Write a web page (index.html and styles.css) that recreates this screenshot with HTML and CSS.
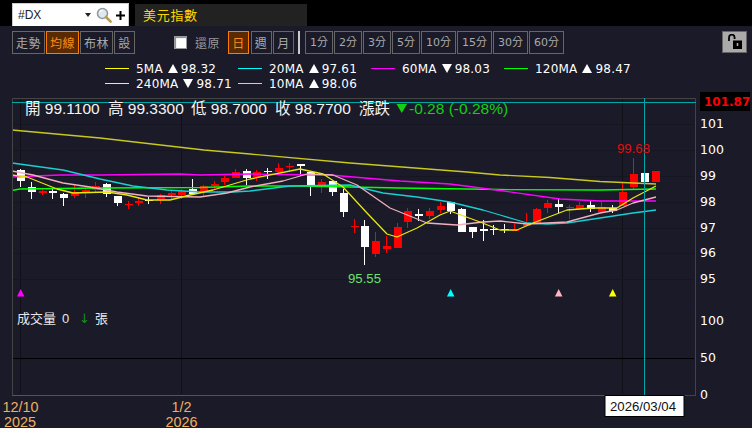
FILE: index.html
```html
<!DOCTYPE html>
<html lang="zh-Hant">
<head>
<meta charset="utf-8">
<title>美元指數</title>
<link rel="stylesheet" href="styles.css">
</head>
<body>
<header class="topbar">
  <div class="search">
    <span class="symbol">#DX</span>
    <span class="caret"></span>
    <svg class="glass" viewBox="0 0 16 16" width="16" height="16">
      <circle cx="6.5" cy="6.5" r="5" fill="#dfe8ee" stroke="#8f9aa3" stroke-width="1.6"/>
      <path d="M3.8 5.2a3 3 0 0 1 3-1.8" fill="none" stroke="#fff" stroke-width="1.2"/>
      <path d="M10 10l4.6 4.6" stroke="#b89a50" stroke-width="2.6" stroke-linecap="round"/>
    </svg>
    <svg class="plus" viewBox="0 0 9 9" width="9" height="9"><path d="M4.5 0v9M0 4.5h9" stroke="#000" stroke-width="2"/></svg>
  </div>
  <div class="title">美元指數</div>
</header>

<nav class="toolbar">
  <div class="group">
    <button class="btn w33">走勢</button>
    <button class="btn w33 on">均線</button>
    <button class="btn w33">布林</button>
    <button class="btn w21">設</button>
  </div>
  <label class="restore"><span class="check"></span><span>還原</span></label>
  <div class="group periods">
    <button class="btn w21 on">日</button>
    <button class="btn w21">週</button>
    <button class="btn w21">月</button>
  </div>
  <span class="divider"></span>
  <div class="group">
    <button class="btn w28 min">1分</button>
    <button class="btn w28 min">2分</button>
    <button class="btn w28 min">3分</button>
    <button class="btn w28 min">5分</button>
    <button class="btn w35 min">10分</button>
    <button class="btn w35 min">15分</button>
    <button class="btn w35 min">30分</button>
    <button class="btn w35 min">60分</button>
  </div>
  <button class="lock" aria-label="解鎖">
    <svg viewBox="0 0 16 16" width="16" height="16">
      <path d="M2 7V3.5a2.8 2.8 0 0 1 5.6 0V5" fill="none" stroke="#000" stroke-width="1.8"/>
      <rect x="6" y="6.5" width="9" height="8.5" fill="#000"/>
      <rect x="9.7" y="9" width="1.6" height="3" fill="#aaa"/>
    </svg>
  </button>
</nav>

<section class="legend">
  <div class="ma"><i class="y"></i><span class="nm">5MA</span><b class="up"></b><span>98.32</span></div>
  <div class="ma"><i class="c"></i><span class="nm">20MA</span><b class="up"></b><span>97.61</span></div>
  <div class="ma"><i class="m"></i><span class="nm">60MA</span><b class="dn"></b><span>98.03</span></div>
  <div class="ma"><i class="g"></i><span class="nm">120MA</span><b class="up"></b><span>98.47</span></div>
  <div class="ma"><i class="y"></i><span class="nm">240MA</span><b class="dn"></b><span>98.71</span></div>
  <div class="ma"><i class="p"></i><span class="nm">10MA</span><b class="up"></b><span>98.06</span></div>
</section>

<main class="chart">
  <svg id="plot" width="752" height="336" viewBox="0 92 752 336">
    <g id="grid"></g>
    <g id="candles"></g>
    <g id="lines"></g>
    <g id="frame"></g>
    <text class="info" y="114" x="25">開 99.1100</text>
    <text class="info" y="114" x="108">高 99.3300</text>
    <text class="info" y="114" x="191">低 98.7000</text>
    <text class="info" y="114" x="275">收 98.7700</text>
    <text class="info" y="114" x="359">漲跌</text>
    <path d="M396.500 104h10.500l-5.250 9z" fill="#13d013"/>
    <text class="info down" y="114" x="409">-0.28 (-0.28%)</text>

    <g class="axis">
      <text x="700" y="128">101</text>
      <text x="700" y="154">100</text>
      <text x="700" y="180">99</text>
      <text x="700" y="206">98</text>
      <text x="700" y="232">97</text>
      <text x="700" y="257">96</text>
      <text x="700" y="283">95</text>
      <text x="700" y="325">100</text>
      <text x="700" y="362">50</text>
      <text x="700" y="399">0</text>
    </g>

    <rect x="700" y="92" width="50" height="19" fill="#000"/>
    <text class="last" x="704" y="106">101.87</text>

    <text class="lo" x="348" y="283">95.55</text>
    <text class="hi" x="617" y="152.500">99.68</text>

    <path d="M20.700 289l3.750 7.500h-7.500z" fill="#f0f"/>
    <path d="M450.700 289l3.750 7.500h-7.500z" fill="#0ff"/>
    <path d="M558.700 289l3.750 7.500h-7.500z" fill="#ffb6c1"/>
    <path d="M612.700 289l3.750 7.500h-7.500z" fill="#ff0"/>

    <text class="vol" x="17" y="323">成交量</text>
    <text class="volnum" x="62" y="323">0</text>
    <text class="volarrow" x="79" y="323">↓</text>
    <text class="vol" x="95" y="323">張</text>

    <text class="date" x="20.500" y="412" text-anchor="middle">12/10</text>
    <text class="date" x="20" y="427" text-anchor="middle">2025</text>
    <text class="date" x="181.500" y="412" text-anchor="middle">1/2</text>
    <text class="date" x="181.500" y="427" text-anchor="middle">2026</text>

    <rect x="605" y="395.500" width="79" height="21" fill="#fff" stroke="#000"/>
    <text class="tip" x="610" y="411">2026/03/04</text>
  </svg>
</main>
<script src="chart.js"></script>
</body>
</html>
```
FILE: styles.css
```css
* { box-sizing: border-box; }
html, body { margin: 0; padding: 0; }
body {
  width: 752px;
  height: 428px;
  overflow: hidden;
  background: #1a1a28;
  font-family: "DejaVu Sans", "Noto Sans CJK TC", sans-serif;
}
.topbar {
  display: flex;
  align-items: flex-end;
  gap: 6px;
  height: 26px;
  padding-left: 12px;
  background: #000;
}
.search {
  display: flex;
  align-items: center;
  width: 117px;
  height: 23px;
  padding-left: 5px;
  background: #fff;
  border: 1px solid #ccc;
  border-bottom: 0;
}
.symbol { flex: 1; font: 12px "Liberation Sans", sans-serif; color: #222; }
.caret {
  width: 0; height: 0;
  margin-right: 5px;
  border-left: 3.500px solid transparent;
  border-right: 3.500px solid transparent;
  border-top: 4px solid #222;
}
.glass { margin-right: 4px; }
.plus { margin-right: 3px; }
.title {
  width: 172px;
  height: 22px;
  padding-left: 8px;
  background: #222;
  color: #ffd700;
  font: 13px/22px "Noto Sans CJK TC", sans-serif;
  letter-spacing: 0.7px;
}
.toolbar {
  display: flex;
  align-items: flex-start;
  height: 27px;
  padding: 5px 5px 0 12px;
}
.group { display: flex; gap: 1px; }
.btn {
  height: 23px;
  padding: 0;
  background: transparent;
  border: 1px solid #666;
  color: #aaa;
  font: 12px/20px "Noto Sans CJK TC", sans-serif;
  letter-spacing: 0.5px;
}
.min { font-family: "DejaVu Sans", "Noto Sans CJK TC", sans-serif; font-size: 11px; letter-spacing: 0; }
.on { background: #5a2a00; border-color: #ff7a00; color: #ff8c1a; }
.w21 { width: 21px; }
.w28 { width: 28px; }
.w33 { width: 33px; }
.w35 { width: 35px; }
.restore {
  display: flex;
  align-items: center;
  gap: 8px;
  height: 23px;
  margin-left: 39px;
  color: #999;
  font: 12px "Noto Sans CJK TC", sans-serif;
  letter-spacing: 0.5px;
}
.check {
  width: 13px;
  height: 13px;
  background: #fff;
  border: 1px solid #999;
  box-shadow: inset 1px 1px 1px #888;
}
.periods { gap: 1.500px; margin-left: 8px; }
.divider {
  width: 2px;
  height: 23px;
  margin: 0 5px 0 4px;
  background: #ccc;
}
.lock {
  display: flex;
  align-items: center;
  justify-content: center;
  width: 25px;
  height: 22px;
  margin-left: auto;
  padding: 0;
  background: #aaa;
  border: 1px solid #666;
}
.legend {
  display: grid;
  grid-template-columns: repeat(4, 133px);
  grid-auto-rows: 15px;
  height: 39px;
  padding: 8px 0 0 105px;
  color: #fff;
  font-size: 12px;
}
.ma { display: flex; align-items: center; white-space: nowrap; letter-spacing: 0.2px; }
.ma i { width: 24px; height: 0; margin-right: 7px; border-top: 1px solid; }
.ma b { width: 0; height: 0; margin: 0 3px 0 5px; border-left: 5.500px solid transparent; border-right: 5.500px solid transparent; }
.ma .up { border-bottom: 9px solid #fff; }
.ma .dn { border-top: 9px solid #fff; }
.y { color: #ff0; }
.c { color: #0ff; }
.m { color: #f0f; }
.g { color: #0f0; }
.p { color: #ffb6c1; }
.chart { display: block; }
#plot { display: block; }
.info { fill: #f4f4f4; font: 15.500px "Liberation Sans", "Noto Sans CJK TC", sans-serif; }
.down { fill: #13d013; }
.axis text { fill: #fff; font: 12.500px "DejaVu Sans", sans-serif; }
.last { fill: #f00; font: bold 12px "DejaVu Sans", sans-serif; }
.lo { fill: #6be06b; font: 13.200px "Liberation Sans", sans-serif; }
.hi { fill: #e01010; font: 13.200px "Liberation Sans", sans-serif; }
.vol { fill: #e8e8e8; font: 13px "Noto Sans CJK TC", sans-serif; }
.volnum { fill: #e8e8e8; font: 13px "Liberation Sans", sans-serif; }
.volarrow { fill: #189018; font: 13px "DejaVu Sans", sans-serif; }
.date { fill: #f0b060; font: 14.400px "Liberation Sans", sans-serif; }
.tip { fill: #111; font: 13.200px "Liberation Sans", sans-serif; }
```
FILE: chart.js
```js
var NS = "http://www.w3.org/2000/svg";

function add(parent, tag, attrs) {
  var el = document.createElementNS(NS, tag);
  for (var k in attrs) el.setAttribute(k, attrs[k]);
  parent.appendChild(el);
  return el;
}

// x, colour (r/w), wick top, wick bottom, body top, body bottom
var candles = [
  [21,"w",169,187,170,181],[32,"w",182,199,187,192],[43,"r",188,195,191,193],
  [53,"w",189,199,191,193],[64,"w",193,206,194,198],[75,"r",185,198,192,196],
  [86,"r",188,198,190,192],[96,"r",182,192,186,190],[107,"w",183,197,184,194],
  [118,"w",196,206,196,203],[129,"r",201,209,204,205],[139,"r",198,206,201,203],
  [149,"w",197,204,200,201],[161,"r",194,204,195,200],[172,"r",190,199,193,195],
  [182,"r",189,199,191,195],[193,"w",179,194,189,194],[204,"r",185,197,186,191],
  [215,"r",181,190,184,186],[225,"r",176,185,178,182],[236,"r",169,178,172,178],
  [247,"w",169,185,171,178],[257,"r",170,181,172,177],[268,"w",168,179,171,172],
  [279,"r",163,173,168,172],[290,"r",163,172,166,167],[301,"w",164,176,164,166],
  [311,"w",172,196,172,186],[322,"r",179,193,182,185],[333,"w",181,196,181,192],
  [344,"w",189,217,193,212],[355,"r",219,233,226,227],[365,"w",220,265,226,247],
  [376,"r",232,257,241,254],[387,"r",236,253,246,249],[398,"r",223,248,227,248],
  [408,"r",208,228,211,222],[419,"w",209,221,214,216],[430,"r",208,219,211,216],
  [441,"r",202,213,206,210],[451,"w",202,214,202,211],[462,"w",208,232,209,232],
  [473,"w",227,238,227,232],[484,"w",220,241,229,231],[494,"w",225,235,229,230],
  [505,"w",224,233,229,230],[515,"r",224,231,230,231],[527,"r",213,226,223,226],
  [537,"r",208,223,209,223],[548,"r",200,213,203,208],[559,"w",199,213,204,207],
  [570,"r",205,219,207,208],[580,"r",202,209,205,209],[591,"w",201,212,205,209],
  [602,"r",202,212,207,212],[613,"w",205,213,208,211],[623,"r",182,206,192,206],
  [634,"r",158,189,174,187],[645,"w",167,182,173,182],[656,"r",171,182,171,182]
];

var lines = [
  ["#c8c81e", [[12,130],[100,138],[204,150],[250,154],[350,163],[467,172],[500,175],[550,177.500],[600,181.500],[656,184]]],
  ["#00ff00", [[12,190.500],[20,189],[100,188],[200,187.500],[250,186],[300,186],[400,188],[500,189.500],[600,190],[656,189]]],
  ["#ff00ff", [[12,177],[60,175],[100,175],[180,174],[200,175],[250,174],[330,175],[400,181],[450,184],[500,190.500],[560,199],[600,201],[656,201]]],
  ["#18d0d0", [[12,163],[63,170],[100,179],[133,186],[167,190],[200,192],[233,192],[250,191],[290,186],[350,185],[383,193],[417,197],[450,202],[483,210],[500,215],[527,223],[547,224],[567,223],[600,218],[633,213],[656,210]]],
  ["#f0b0bc", [[12,171],[33,175],[63,183],[90,187],[117,192],[147,196],[200,197],[227,193],[250,187],[283,181],[307,174],[333,175],[357,185],[390,208],[427,223],[457,225],[483,222],[500,221],[527,224],[567,222],[600,213],[617,210],[633,203],[656,197]]],
  ["#e6e610", [[12,175],[27,177],[57,189],[73,193],[107,192],[127,195],[147,200],[170,200],[190,195],[213,190],[250,179],[300,169],[323,174],[343,187],[367,213],[387,234],[397,237],[417,228],[440,215],[450,211],[480,222],[500,230],[517,230],[533,223],[567,210],[593,208],[617,208],[633,198],[656,186]]]
];

var grid = document.getElementById("grid");
[20.500, 181.500, 622.500].forEach(function (x) {
  add(grid, "line", { x1: x, x2: x, y1: 99, y2: 394, stroke: "#101018" });
});
add(grid, "line", { x1: 13, x2: 694, y1: 358.500, y2: 358.500, stroke: "#000" });
[124, 150, 176, 202, 228, 253, 279].forEach(function (y) {
  add(grid, "line", { x1: 13, x2: 694, y1: y + 0.500, y2: y + 0.500, stroke: "#161622" });
});

var cg = document.getElementById("candles");
candles.forEach(function (c) {
  var col = c[1] === "r" ? "#ff0000" : "#ffffff";
  add(cg, "rect", { x: c[0] - 1, y: c[2], width: 1, height: c[3] - c[2], fill: col });
  add(cg, "rect", { x: c[0] - 4, y: c[4], width: 8, height: Math.max(1, c[5] - c[4]), fill: col });
});

var lg = document.getElementById("lines");
lines.forEach(function (l) {
  add(lg, "polyline", {
    points: l[1].map(function (p) { return p.join(","); }).join(" "),
    fill: "none", stroke: l[0], "stroke-width": 1.3, "stroke-linejoin": "round"
  });
});

var fr = document.getElementById("frame");
add(fr, "path", { d: "M12.500 395V98.500H695.500V395", fill: "none", stroke: "#444" });
add(fr, "line", { x1: 12, x2: 696, y1: 395.500, y2: 395.500, stroke: "#444" });
add(fr, "line", { x1: 12, x2: 605, y1: 395.500, y2: 395.500, stroke: "#1d7a1d" });
add(fr, "line", { x1: 12, x2: 696, y1: 102.500, y2: 102.500, stroke: "#00a8a8" });
add(fr, "line", { x1: 644.500, x2: 644.500, y1: 98, y2: 395, stroke: "#00a8a8" });
```
